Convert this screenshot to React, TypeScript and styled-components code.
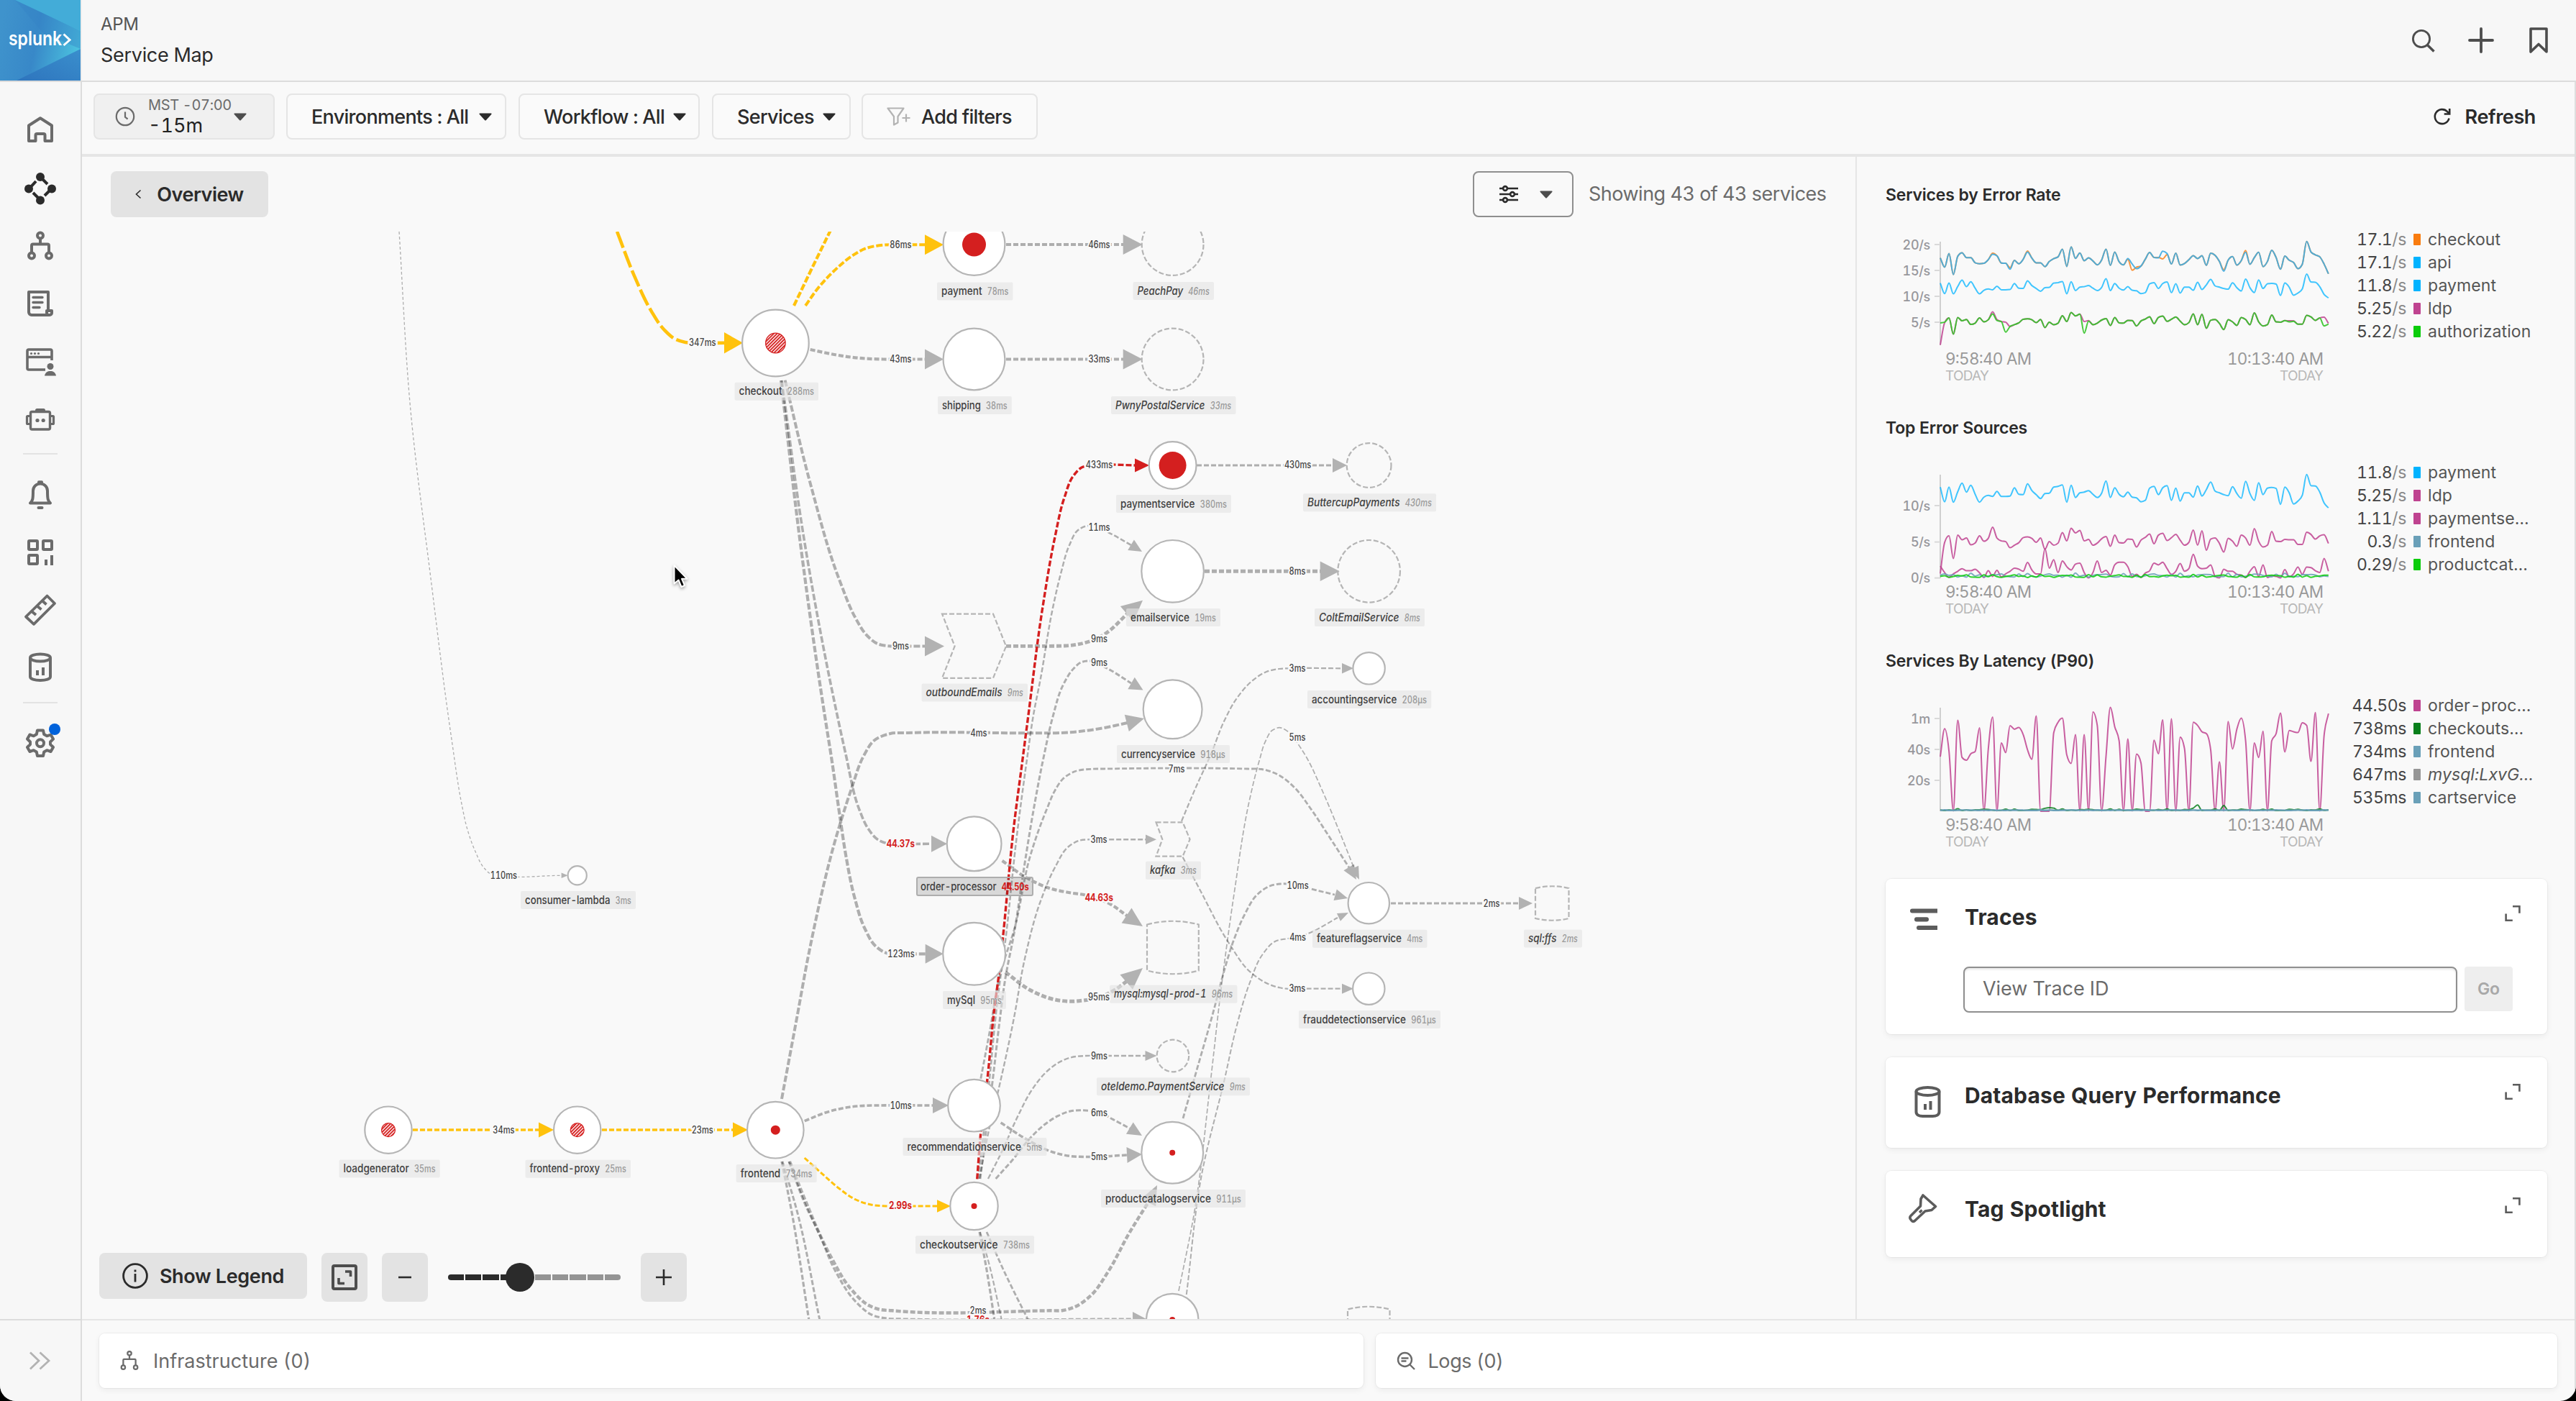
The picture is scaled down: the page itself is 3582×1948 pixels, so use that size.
import React from "react";
import styled, { createGlobalStyle, css } from "styled-components";

const FONT = `Inter, "Noto Sans", "Liberation Sans", sans-serif`;

const GlobalStyle = createGlobalStyle`
  * { box-sizing: border-box; }
  html, body { margin: 0; background: #000; }
  body { font-family: ${FONT}; color: #2b2b2b; font-variant-numeric: tabular-nums; }
  button, input { font-family: inherit; }
`;

/* ---------------------------------------------------------------- layout */

const Shell = styled.div`
  width: 3582px;
  height: 1948px;
  display: flex;
  flex-direction: column;
  background: #f9f9f9;
  border-radius: 0 0 22px 22px;
  overflow: hidden;
`;

const Header = styled.header`
  height: 114px;
  flex: none;
  display: flex;
  background: #f7f7f7;
  border-bottom: 2px solid #dcdcdc;
`;

const Titles = styled.div`
  border-left: 2px solid #ededed;
  padding: 18px 0 0 26px;
  display: flex;
  flex-direction: column;
  gap: 11px;
`;

const Product = styled.div`
  font-size: 24px;
  line-height: 32px;
  letter-spacing: -0.35px;
  color: #555;
`;

const PageTitle = styled.div`
  font-size: 27px;
  line-height: 32px;
  letter-spacing: -0.3px;
  color: #2b2b2b;
`;

const HeaderActions = styled.div`
  margin-left: auto;
  display: flex;
  align-items: center;
  gap: 32px;
  padding-right: 28px;
`;

const Body = styled.div`
  flex: 1;
  min-height: 0;
  display: flex;
`;

const Sidebar = styled.nav`
  width: 114px;
  flex: none;
  display: flex;
  flex-direction: column;
  align-items: center;
  padding-top: 26px;
  background: #f7f7f7;
  border-right: 2px solid #dcdcdc;
`;

const NavItem = styled.div<{ $h?: number }>`
  position: relative;
  width: 112px;
  height: ${(p) => p.$h ?? 80.6}px;
  flex: none;
  display: flex;
  align-items: center;
  justify-content: center;
`;

const NavRule = styled.div<{ $top: number; $bottom: number }>`
  width: 48px;
  height: 2px;
  flex: none;
  background: #e3e3e3;
  margin: ${(p) => p.$top}px 0 ${(p) => p.$bottom}px;
`;

const Notice = styled.i`
  position: absolute;
  left: 68px;
  top: 13px;
  width: 16px;
  height: 16px;
  border-radius: 50%;
  background: #0062db;
`;

const NavFooter = styled.div`
  width: 112px;
  height: 114px;
  margin-top: auto;
  border-top: 2px solid #dcdcdc;
  display: flex;
  align-items: center;
  justify-content: center;
`;

const Main = styled.main`
  flex: 1;
  min-width: 0;
  display: flex;
  flex-direction: column;
  border-right: 2px solid #dedede;
`;

const Toolbar = styled.div`
  height: 104px;
  flex: none;
  display: flex;
  align-items: flex-start;
  padding: 16px 0 0 16px;
  border-bottom: 4px solid #e6e6e6;
`;

const FilterButton = styled.div<{ $w: number; $mr?: number; $filled?: boolean; $pad?: number }>`
  width: ${(p) => p.$w}px;
  height: 64px;
  margin-right: ${(p) => p.$mr ?? 17}px;
  padding-left: ${(p) => p.$pad ?? 33}px;
  display: flex;
  align-items: center;
  border: 2px solid #e5e5e5;
  border-radius: 8px;
  background: ${(p) => (p.$filled ? "#f0f0f0" : "#fafafa")};
  font-size: 27px;
  font-weight: 500;
  white-space: nowrap;
`;

const FilterLabel = styled.span<{ $w: number }>`
  width: ${(p) => p.$w}px;
  letter-spacing: -0.7px;
`;

const TimeText = styled.div`
  width: 119px;
  margin-left: 18px;
  display: flex;
  flex-direction: column;
`;

const Zone = styled.span`
  font-size: 20px;
  font-weight: 400;
  line-height: 25px;
  letter-spacing: -0.35px;
  color: #6b6b6b;
`;

const Range = styled.span`
  font-size: 27px;
  font-weight: 400;
  line-height: 31px;
  color: #222;
`;

const Refresh = styled.div`
  margin: 0 54px 0 auto;
  height: 64px;
  display: flex;
  align-items: center;
  gap: 19px;
  font-size: 27px;
  font-weight: 600;
  letter-spacing: -0.4px;
`;

const Content = styled.div`
  flex: 1;
  min-height: 0;
  display: flex;
`;

const MapPane = styled.section`
  position: relative;
  width: 2466px;
  flex: none;
  display: flex;
  flex-direction: column;
`;

const MapBar = styled.div`
  height: 104px;
  flex: none;
  display: flex;
  align-items: flex-start;
  padding: 20px 40px 0 40px;
`;

const SolidButton = styled.button<{ $w: number; $h: number; $mr?: number }>`
  width: ${(p) => p.$w}px;
  height: ${(p) => p.$h}px;
  margin: 0 ${(p) => p.$mr ?? 0}px 0 0;
  padding: 0;
  border: 0;
  border-radius: 8px;
  background: #e3e3e3;
  color: #2b2b2b;
  font-size: 27px;
  font-weight: 600;
  display: flex;
  align-items: center;
  justify-content: center;
  white-space: nowrap;
`;

const ButtonText = styled.span<{ $ml?: number; $ls?: number }>`
  margin-left: ${(p) => p.$ml ?? 0}px;
  letter-spacing: ${(p) => p.$ls ?? 0}px;
`;

const OptionsButton = styled.div`
  width: 140px;
  height: 64px;
  margin-left: auto;
  border: 2px solid #8f8f8f;
  border-radius: 8px;
  display: flex;
  align-items: center;
  padding-left: 35px;
  gap: 30px;
`;

const Count = styled.div`
  width: 331px;
  margin-left: 21px;
  font-size: 27px;
  line-height: 64px;
  letter-spacing: -0.5px;
  color: #6b6b6b;
  white-space: nowrap;
`;

const MapSvg = styled.svg`
  display: block;
  width: 2466px;
  height: 1512px;
  flex: none;
`;

const ZoomDock = styled.div`
  position: absolute;
  left: 24px;
  bottom: 24px;
  display: flex;
  align-items: flex-start;
`;

const Track = styled.div`
  position: relative;
  width: 240px;
  height: 68px;
  margin: 0 28px;
  display: flex;
  align-items: center;
  gap: 2px;
`;

const Segment = styled.i<{ $on: boolean }>`
  flex: 1;
  height: 8px;
  background: ${(p) => (p.$on ? "#2b2b2b" : "#949494")};
  &:first-child { border-radius: 4px 0 0 4px; }
  &:nth-child(10) { border-radius: 0 4px 4px 0; }
`;

const Thumb = styled.i`
  position: absolute;
  left: 80px;
  top: 14px;
  width: 40px;
  height: 40px;
  border-radius: 50%;
  background: #2b2b2b;
`;

const Aside = styled.aside`
  flex: 1;
  border-left: 2px solid #e6e6e6;
  padding: 36px 37px 0 40px;
  display: flex;
  flex-direction: column;
`;

const Section = styled.section<{ $h: number }>`
  height: ${(p) => p.$h}px;
  flex: none;
`;

const SectionTitle = styled.h3`
  margin: 0;
  font-size: 23px;
  font-weight: 600;
  line-height: 35px;
  height: 32px;
  letter-spacing: -0.2px;
  color: #2b2b2b;
`;

const ChartRow = styled.div`
  display: flex;
`;

const ChartSvg = styled.svg`
  display: block;
  width: 638px;
  height: 270px;
  flex: none;
`;

const LegendList = styled.div`
  flex: 1;
  padding-top: 31px;
  font-size: 23px;
  color: #555;
`;

const LegendItem = styled.div`
  height: 32px;
  display: grid;
  grid-template-columns: 86px 10px 1fr;
  column-gap: 10px;
  align-items: center;
  white-space: nowrap;
`;

const LegendValue = styled.span`
  text-align: right;
  letter-spacing: -0.4px;
  color: #444;
  em { font-style: normal; color: #8a8a8a; }
`;

const Swatch = styled.i<{ $c: string }>`
  width: 10px;
  height: 16px;
  border-radius: 1px;
  background: ${(p) => p.$c};
`;

const LegendName = styled.span<{ $italic?: boolean }>`
  font-style: ${(p) => (p.$italic ? "italic" : "normal")};
  letter-spacing: 0.1px;
`;

const surface = css`
  background: #fff;
  border-radius: 8px;
  box-shadow: 0 0 0 1px rgba(0, 0, 0, 0.04), 0 3px 9px rgba(0, 0, 0, 0.06);
`;

const Card = styled.div<{ $h: number }>`
  ${surface}
  width: 920px;
  height: ${(p) => p.$h}px;
  margin-bottom: 32px;
  flex: none;
`;

const CardHead = styled.div`
  display: flex;
  align-items: flex-start;
  padding: 32px 37px 0 30px;
`;

const CardIcon = styled.div`
  width: 80px;
`;

const CardTitle = styled.h2`
  margin: 0;
  flex: 1;
  font-size: 30px;
  font-weight: 700;
  line-height: 42px;
  letter-spacing: 0.12px;
`;

const TraceForm = styled.div`
  display: flex;
  gap: 10px;
  padding: 42px 0 0 108px;
`;

const TraceInput = styled.div`
  width: 687px;
  height: 64px;
  border: 2px solid #8f8f8f;
  border-radius: 8px;
  padding-left: 25px;
  line-height: 58px;
  font-size: 27px;
  letter-spacing: -0.05px;
  color: #6b6b6b;
  box-shadow: inset 0 2px 3px rgba(0, 0, 0, 0.1);
`;

const GoButton = styled.div`
  width: 67px;
  height: 62px;
  border-radius: 4px;
  background: #eee;
  color: #a8a8a8;
  font-size: 23px;
  font-weight: 600;
  line-height: 62px;
  text-align: center;
`;

const BottomBar = styled.footer`
  height: 114px;
  flex: none;
  border-top: 2px solid #e6e6e6;
  display: flex;
  gap: 17px;
  padding: 18px 24px 0;
`;

const Drawer = styled.div<{ $w: number; $gap?: number; $ls?: number }>`
  ${surface}
  width: ${(p) => p.$w}px;
  height: 76px;
  display: flex;
  align-items: center;
  gap: ${(p) => p.$gap ?? 20}px;
  padding-left: 29px;
  font-size: 27px;
  letter-spacing: ${(p) => p.$ls ?? 0}px;
  color: #6b6b6b;
`;

/* ----------------------------------------------------------------- icons */

const NavGlyph = styled.svg`
  overflow: visible;
`;

const NavIcon = ({ children, color = "#6b6b6b" }: { children: React.ReactNode; color?: string }) => (
  <NavGlyph width="48" height="48" viewBox="0 0 48 48" fill="none" stroke={color} strokeWidth="4" strokeLinejoin="round">
    {children}
  </NavGlyph>
);

const Caret = ({ color = "#2b2b2b" }: { color?: string }) => (
  <svg width="18" height="11" viewBox="0 0 18 11">
    <path d="M1 .5h16q1 .4.3 1.4L9.8 10.2q-.8.8-1.6 0L.7 1.9Q0 .9 1 .5z" fill={color} />
  </svg>
);

const HierarchyShapes = () => (
  <>
    <circle cx="24" cy="10.500" r="4" />
    <path d="M24 14.500v8M12 34.500V24.500a2 2 0 0 1 2-2h20a2 2 0 0 1 2 2v10" />
    <circle cx="12" cy="38.500" r="4" />
    <circle cx="36" cy="38.500" r="4" />
  </>
);

const CylinderShapes = () => (
  <>
    <ellipse cx="24" cy="10.500" rx="14" ry="5" />
    <path d="M10 10.500V37c0 3 6 5 14 5s14-2 14-5V10.500M20 28v7M28 24v11" />
  </>
);

const Expand = styled.svg`
  margin-top: 5px;
`;

const ExpandIcon = () => (
  <Expand width="22" height="22" viewBox="0 0 22 22" fill="none" stroke="#5c5c5c" strokeWidth="2.600">
    <path d="M11 1.300h9.400v9.400M1.600 11.500v9.200h9.200" />
  </Expand>
);

const Logo = () => (
  <svg width="112" height="112" viewBox="0 0 112 112">
    <defs>
      <linearGradient id="mid" x1="0" y1="0.4" x2="1" y2="0.6">
        <stop offset="0" stopColor="#3f93cc" />
        <stop offset="0.45" stopColor="#3888c8" />
        <stop offset="1" stopColor="#4cc4e0" />
      </linearGradient>
      <linearGradient id="low" x1="0" y1="1" x2="1" y2="0">
        <stop offset="0" stopColor="#2e74bd" />
        <stop offset="1" stopColor="#3a8fcd" />
      </linearGradient>
    </defs>
    <rect width="112" height="112" fill="url(#mid)" />
    <path d="M21 0L60 46L112 68V43z" fill="#3583c6" opacity="0.4" />
    <path d="M21 0H112V43z" fill="#43acd8" />
    <path d="M112 68V112H23z" fill="url(#low)" />
    <text x="12" y="63" fontFamily={FONT} fontSize="27" fontWeight="600" fill="#fff" textLength="74" lengthAdjust="spacingAndGlyphs">splunk</text>
    <path d="M88.500 47.500L97 55.500L88.500 63" fill="none" stroke="#fff" strokeWidth="3" />
  </svg>
);

/* ------------------------------------------------------------ service map */

type Pt = [number, number];

/* Smooth curve through the given points, tangents weighted by chord length. */
function spline(pts: Pt[]): string {
  const n = pts.length;
  const seg = pts.slice(1).map((p, i) => {
    const dx = p[0] - pts[i][0];
    const dy = p[1] - pts[i][1];
    const l = Math.hypot(dx, dy) || 1;
    return { ux: dx / l, uy: dy / l, l };
  });
  const tan = pts.map((_, i) => {
    if (i === 0) return [seg[0].ux, seg[0].uy];
    if (i === n - 1) return [seg[n - 2].ux, seg[n - 2].uy];
    const a = seg[i - 1];
    const b = seg[i];
    const s = a.l + b.l;
    return [(a.ux * b.l + b.ux * a.l) / s, (a.uy * b.l + b.uy * a.l) / s];
  });
  let d = `M${pts[0][0]} ${pts[0][1]}`;
  for (let i = 0; i < n - 1; i++) {
    const k = seg[i].l / 3;
    const [x0, y0] = pts[i];
    const [x1, y1] = pts[i + 1];
    const f = (v: number) => v.toFixed(1);
    d += `C${f(x0 + tan[i][0] * k)} ${f(y0 + tan[i][1] * k)} ${f(x1 - tan[i + 1][0] * k)} ${f(y1 - tan[i + 1][1] * k)} ${x1} ${y1}`;
  }
  return d;
}

const GREY = "rgba(0,0,0,0.3)";
const GOLD = "#ffc20d";
const RED = "#d41f1f";

interface Edge {
  p: Pt[];
  w: number;
  c?: string;
  dash?: string;
  tip?: Pt;
  head?: [number, number];
  t?: string;
  at?: Pt;
  hot?: boolean;
}

const edges: Edge[] = [
  { p: [[555, 322], [571, 571], [598.5, 800], [628, 1028], [642, 1118], [649, 1150], [661, 1184], [673, 1206.7], [682, 1215], [692, 1217], [781, 1217.3]], w: 1.3, dash: "4 3", tip: [789.6, 1217.3], head: [9, 3.8], t: "110ms", at: [700.4, 1217] },
  { p: [[858, 322], [881.6, 382.6], [905.7, 432.6], [923.5, 458.5], [938, 471], [953, 476], [970, 476.8], [1008, 476.8]], w: 4.6, c: GOLD, dash: "24 5", tip: [1033, 476.8], head: [26, 14.7], t: "347ms", at: [976.8, 476] },
  { p: [[1104, 425], [1130, 371], [1155, 320]], w: 4.2, c: GOLD, dash: "9 3" },
  { p: [[1120, 425], [1138, 400], [1163, 373.6], [1183, 357], [1205, 345], [1229, 340.7], [1245, 340.3], [1288, 340.3]], w: 4, c: GOLD, dash: "9 3", tip: [1312, 340.3], head: [26, 14], t: "86ms", at: [1252.4, 340] },
  { p: [[1399, 340], [1564, 340]], w: 4.2, tip: [1588.7, 340], head: [27, 14], t: "46ms", at: [1528.5, 340] },
  { p: [[1126.7, 486], [1155, 492], [1194, 497.8], [1229, 499.5], [1245, 499.5], [1289, 499.5]], w: 4.2, tip: [1312, 499.5], head: [26, 14], t: "43ms", at: [1252.4, 499] },
  { p: [[1399, 499.5], [1564, 499.5]], w: 4.2, tip: [1588.7, 499.5], head: [27, 14], t: "33ms", at: [1528.5, 499] },
  { p: [[1091.6, 528.6], [1126.7, 672], [1168.6, 810], [1190, 860], [1205, 883], [1220, 895], [1236, 898.3], [1250, 898.5], [1289, 898.5]], w: 4, dash: "9 3", tip: [1313, 898.5], head: [27, 14], t: "9ms", at: [1252.4, 898] },
  { p: [[1087, 529], [1117.5, 746], [1164.5, 996], [1176.3, 1050], [1195.4, 1127], [1207, 1152], [1220, 1167], [1234, 1172.8], [1248, 1173.3], [1297, 1173.3]], w: 3.6, dash: "9 3", tip: [1317, 1173.3], head: [22, 11.5], t: "44.37s", at: [1252.4, 1173], hot: true },
  { p: [[1086, 529], [1111.7, 746], [1147, 996], [1155.6, 1050], [1168.6, 1140], [1176.3, 1190], [1188, 1246.7], [1203, 1292], [1218, 1316], [1233.7, 1325.5], [1250, 1326.3], [1290, 1326.3]], w: 4.2, dash: "9 3", tip: [1311.7, 1326.3], head: [25, 13.5], t: "123ms", at: [1253, 1326] },
  { p: [[1087, 1528], [1107.8, 1416.7], [1126.5, 1316.7], [1164.8, 1156.7], [1184, 1096.7], [1201.5, 1050], [1215, 1030], [1238, 1020], [1262, 1019], [1440, 1019.3], [1475, 1019], [1501, 1017], [1537, 1011.7], [1568, 1005]], w: 4, dash: "9 3", tip: [1591, 999], head: [25, 12], t: "4ms", at: [1361, 1019] },
  { p: [[1399, 898.3], [1460, 898.3], [1480, 898], [1498.6, 896], [1515.8, 891.5], [1536, 881.7], [1569, 852]], w: 4.8, tip: [1589, 834.8], head: [29, 14], t: "9ms", at: [1528.5, 888] },
  { p: [[1675, 794.3], [1838, 794.3]], w: 5, tip: [1862.7, 794.3], head: [27, 13.7], t: "8ms", at: [1804, 794] },
  { p: [[1664, 647], [1855, 647]], w: 3.2, tip: [1873, 647], head: [20, 10], t: "430ms", at: [1804.6, 646.5] },
  { p: [[1360, 1639], [1368, 1573], [1376, 1500], [1386, 1400], [1399, 1300], [1413, 1170], [1428.8, 1050], [1436.6, 996.4], [1447, 943], [1463, 850], [1475.6, 795.5], [1487, 758], [1498.6, 737.5], [1510, 731.5], [1522, 732], [1541.7, 740.6], [1573, 758]], w: 2.5, tip: [1588, 767], head: [18, 8.5], t: "11ms", at: [1528.5, 733] },
  { p: [[1363, 1639], [1371, 1573], [1380.6, 1499.7], [1390, 1420], [1398, 1360], [1409.7, 1300], [1425, 1200], [1436.5, 1130], [1451.8, 1050], [1464, 996.4], [1478.5, 952], [1493, 929.5], [1503, 921], [1515, 919], [1538.8, 929], [1573, 950]], w: 3, tip: [1589.5, 959.5], head: [19, 9.5], t: "9ms", at: [1528.5, 921] },
  { p: [[1363.8, 1499.7], [1377, 1430], [1390.5, 1355], [1411, 1290], [1432.6, 1190], [1455.6, 1125], [1467, 1099], [1478, 1083], [1495, 1072.5], [1516.8, 1069.3], [1535, 1069], [1735, 1069], [1754, 1069.5], [1777, 1077], [1800, 1095], [1823, 1125], [1850, 1166], [1877, 1208]], w: 2.8, tip: [1886, 1223], head: [20, 8.5], t: "7ms", at: [1636, 1069] },
  { p: [[1362, 1639], [1376, 1567], [1388, 1517], [1409.7, 1416.7], [1425, 1333], [1448, 1250], [1467, 1206], [1486, 1177], [1500, 1169], [1514, 1167.3], [1530, 1167.3], [1593, 1167.3]], w: 2.4, tip: [1608, 1167.3], head: [15, 6.7], t: "3ms", at: [1528, 1167] },
  { p: [[1374, 1639], [1393.7, 1600], [1414.8, 1553], [1435.8, 1514], [1453.4, 1492], [1471, 1478], [1488.5, 1470.5], [1510, 1468], [1525, 1468], [1594, 1468]], w: 2.4, tip: [1608.5, 1468], head: [16, 7], t: "9ms", at: [1528.4, 1468] },
  { p: [[1384.6, 1639], [1407.8, 1613], [1432, 1583], [1453.4, 1563], [1471, 1551.7], [1488.5, 1545], [1509.5, 1544], [1528, 1546.5], [1548, 1556.7], [1573, 1570]], w: 3, tip: [1588, 1579], head: [20, 9.5], t: "6ms", at: [1528.4, 1547] },
  { p: [[1391.6, 1561], [1428.8, 1585], [1464, 1602], [1488.5, 1607.5], [1513, 1608.5], [1568, 1606]], w: 3.5, tip: [1588, 1605], head: [21, 11], t: "5ms", at: [1528.4, 1608] },
  { p: [[1118.7, 1558.7], [1148, 1547], [1179.8, 1539.5], [1204, 1537.3], [1220, 1537], [1299, 1537]], w: 3.6, tip: [1319, 1537], head: [22, 11], t: "10ms", at: [1252.7, 1537] },
  { p: [[1118.7, 1610], [1141, 1630], [1165.8, 1651.7], [1190, 1668], [1211, 1675], [1232, 1677], [1250, 1677], [1305, 1677]], w: 3, c: GOLD, tip: [1322, 1677], head: [19, 8.8], t: "2.99s", at: [1252, 1676.5], hot: true },
  { p: [[1098, 1615], [1120, 1670], [1155, 1746.7], [1183, 1792], [1208, 1815], [1222, 1820.5], [1240, 1822.3], [1460, 1822.3], [1478, 1822], [1495.5, 1816.7], [1516.5, 1801.7], [1541, 1768], [1569, 1716.7], [1599, 1668]], w: 4.4, tip: [1609, 1648], head: [27, 11.5], t: "2ms", at: [1360, 1822] },
  { p: [[1097, 1615], [1122, 1680], [1137.7, 1712], [1162, 1768], [1190, 1810], [1212, 1828], [1236, 1833.5], [1255, 1834], [1577, 1834]], w: 3.2, tip: [1594, 1834], head: [19, 10], t: "1.76s", at: [1360, 1835.5], hot: true },
  { p: [[1087, 1615], [1100.5, 1683], [1125, 1836]], w: 3.2 },
  { p: [[1088, 1615], [1108, 1683], [1140, 1836]], w: 3 },
  { p: [[1362, 1713], [1371, 1760], [1383, 1836]], w: 3.2 },
  { p: [[1363, 1713], [1376, 1760], [1393, 1836]], w: 2.2 },
  { p: [[1372, 1713], [1395, 1765], [1430, 1836]], w: 2.8 },
  { p: [[1643, 1141.7], [1662, 1096.7], [1684.7, 1046.7], [1702, 1003], [1720.4, 970], [1740.8, 947], [1761, 934], [1779, 930], [1795, 929.3], [1867, 929.3]], w: 2.2, tip: [1882, 929.3], head: [16, 7.3], t: "3ms", at: [1804, 929] },
  { p: [[1644.6, 1191.7], [1670, 1240], [1708, 1310], [1738.8, 1351.7], [1765.6, 1369], [1788.5, 1374.7], [1805, 1374.7], [1867, 1374.7]], w: 2.2, tip: [1882, 1374.7], head: [16, 7], t: "3ms", at: [1803.8, 1374.5] },
  { p: [[1934, 1256], [2114, 1256]], w: 3.2, tip: [2131, 1256], head: [19, 9], t: "2ms", at: [2074, 1256] },
  { p: [[1393.6, 1196.7], [1425, 1219], [1459.4, 1235], [1486, 1241], [1511.5, 1245], [1528, 1250], [1539.8, 1255], [1571, 1276]], w: 4.2, tip: [1589, 1288], head: [27, 12.5], t: "44.63s", at: [1528.3, 1248], hot: true },
  { p: [[1398, 1351.7], [1432.7, 1376.7], [1463, 1389], [1486, 1392.3], [1509, 1390.7], [1528, 1387], [1547.5, 1378], [1575, 1358]], w: 5, tip: [1589, 1346], head: [30, 13.5], t: "95ms", at: [1528, 1386] },
  { p: [[1645, 1555], [1660.7, 1499.7], [1689, 1400], [1700.5, 1356], [1716, 1306], [1731, 1271], [1748, 1244], [1765.6, 1232], [1780, 1229], [1800, 1230], [1823, 1236], [1856, 1244]], w: 2.8, tip: [1874, 1249], head: [18, 8], t: "10ms", at: [1804.6, 1231] },
  { p: [[1649.8, 1800], [1671, 1633], [1703, 1499.7], [1719.6, 1426.7], [1738, 1366], [1755, 1328], [1773, 1309], [1790, 1305], [1804, 1303], [1819, 1298], [1860, 1276]], w: 2, tip: [1875, 1269], head: [15, 6], t: "4ms", at: [1804.6, 1303] },
  { p: [[1639, 1795], [1660, 1690], [1683.7, 1499.7], [1697, 1383], [1716, 1243], [1738, 1110], [1751, 1058], [1760, 1030], [1769, 1015.5], [1779, 1011.7], [1790, 1016.5], [1804.6, 1034], [1815, 1050], [1839, 1100], [1862, 1155], [1882, 1205]], w: 1.7, tip: [1890, 1223], head: [18, 7], t: "5ms", at: [1804, 1025] },
  { p: [[574, 1571], [751, 1571]], w: 3.6, c: GOLD, tip: [770, 1571], head: [21, 10.5], t: "34ms", at: [700.4, 1571] },
  { p: [[837, 1571], [1021, 1571]], w: 3.6, c: GOLD, tip: [1040, 1571], head: [21, 10.5], t: "23ms", at: [976.7, 1571] },
  { p: [[1358.7, 1639.3], [1364, 1573], [1373, 1500], [1383, 1400], [1389, 1355], [1394.4, 1305], [1409.7, 1150], [1422.7, 1050], [1429.7, 996.4], [1449.8, 844.6], [1467, 746.4], [1480, 692], [1493, 661], [1505, 649.5], [1520, 647], [1580, 647]], w: 3.4, c: RED, dash: "8 3", tip: [1598, 647], head: [20, 9.6], t: "433ms", at: [1528.5, 646.5] },
];

const EdgeLine = ({ e }: { e: Edge }) => {
  const c = e.c ?? GREY;
  let head: React.ReactNode = null;
  if (e.tip && e.head) {
    const last = e.p[e.p.length - 1];
    const a = Math.atan2(e.tip[1] - last[1], e.tip[0] - last[0]);
    const [l, h] = e.head;
    head = (
      <path
        d={`M0 0L${-l} ${-h}V${h}z`}
        transform={`translate(${e.tip[0]} ${e.tip[1]}) rotate(${(a * 180) / Math.PI})`}
        fill={e.c ?? "#b2b2b2"}
      />
    );
  }
  return (
    <g>
      <path d={spline(e.p)} fill="none" stroke={c} strokeWidth={e.w} strokeDasharray={e.dash ?? "7 3"} />
      {head}
    </g>
  );
};

const EdgeText = ({ e }: { e: Edge }) => {
  if (!e.t || !e.at) return null;
  const digits = e.t.replace(/[^0-9]/g, "").length;
  const w = digits * 7.3 + (e.t.endsWith("ms") ? 15.5 : 6.5) + (e.t.includes(".") ? 3.5 : 0);
  return (
    <text
      x={e.at[0]}
      y={e.at[1] + 4.9}
      textAnchor="middle"
      textLength={w}
      lengthAdjust="spacingAndGlyphs"
      fontSize="14"
      fontWeight={e.hot ? 700 : 500}
      fill={e.hot ? RED : "#444"}
      stroke="#f9f9f9"
      strokeWidth="5"
      paintOrder="stroke"
    >
      {e.t}
    </text>
  );
};

interface Circle {
  x: number;
  y: number;
  r: number;
  dashed?: boolean;
  dot?: number;
  hatch?: boolean;
}

const circles: Circle[] = [
  { x: 1354.5, y: 340, r: 44, dot: 16.5 },
  { x: 1630.6, y: 340, r: 44, dashed: true },
  { x: 1078.4, y: 477, r: 47.4, dot: 14.3, hatch: true },
  { x: 1354.5, y: 499.5, r: 44 },
  { x: 1630.6, y: 499.5, r: 44, dashed: true },
  { x: 1630.6, y: 647, r: 34, dot: 19 },
  { x: 1903.6, y: 647, r: 32, dashed: true },
  { x: 1630.6, y: 794.3, r: 44.4 },
  { x: 1903.6, y: 794.3, r: 44.4, dashed: true },
  { x: 1903.6, y: 929.3, r: 23.3 },
  { x: 1630.6, y: 986.3, r: 42 },
  { x: 1354.6, y: 1173.3, r: 39 },
  { x: 1354.6, y: 1326.3, r: 44.5 },
  { x: 1903.3, y: 1255.7, r: 29.8 },
  { x: 1903.3, y: 1374.7, r: 23.3 },
  { x: 1630.9, y: 1468, r: 23.4, dashed: true },
  { x: 802.7, y: 1217.3, r: 14.2 },
  { x: 540, y: 1571.2, r: 33.8, dot: 10, hatch: true },
  { x: 802.7, y: 1571.2, r: 33.8, dot: 10, hatch: true },
  { x: 1078.3, y: 1571.2, r: 40.4, dot: 6.5 },
  { x: 1354.5, y: 1537.2, r: 37.4 },
  { x: 1354.5, y: 1677, r: 34.3, dot: 4 },
  { x: 1630.2, y: 1602.8, r: 44, dot: 4 },
  { x: 1630.2, y: 1835, r: 37.3, dot: 4 },
];

const outlines = [
  "M1310 853.6H1381L1399 898.5L1381 942.8H1310L1327.6 898.5Z",
  "M1607.5 1143.3H1644.6L1654.6 1167L1644.6 1190.7H1607.5L1616.3 1167Z",
  "M1595 1285.5Q1631 1276 1666.8 1285.5V1349.5Q1631 1359 1595 1349.5Z",
  "M2135 1235Q2158.5 1229.5 2181.5 1235V1277Q2158.5 1282.5 2135 1277Z",
  "M1874 1840V1820.5Q1903 1813 1932.5 1820.5V1840",
];

/* name, value, left, right, top, italic */
type Tag = [string, string, number, number, number, boolean?];

const tags: Tag[] = [
  ["payment", "78ms", 1303, 1408.5, 392.5],
  ["PeachPay", "46ms", 1575.5, 1688, 392, true],
  ["checkout", "288ms", 1021.6, 1138, 531.7],
  ["shipping", "38ms", 1304, 1406.8, 551],
  ["PwnyPostalService", "33ms", 1545, 1718.4, 551, true],
  ["paymentservice", "380ms", 1552, 1712, 688],
  ["ButtercupPayments", "430ms", 1812, 1997, 686.3, true],
  ["emailservice", "19ms", 1566, 1697, 846],
  ["ColtEmailService", "8ms", 1828, 1981, 846, true],
  ["outboundEmails", "9ms", 1281.6, 1429, 950.4, true],
  ["accountingservice", "208µs", 1818, 1990.3, 960],
  ["currencyservice", "918µs", 1553, 1710, 1036],
  ["mySql", "95ms", 1311, 1399, 1378],
  ["kafka", "3ms", 1593, 1670, 1197.7, true],
  ["mysql:mysql-prod-1", "96ms", 1543, 1720.4, 1369.7, true],
  ["featureflagservice", "4ms", 1825, 1984.5, 1292.7],
  ["sql:ffs", "2ms", 2119, 2200, 1292.4, true],
  ["frauddetectionservice", "961µs", 1806, 2003, 1405],
  ["consumer-lambda", "3ms", 724, 884, 1239],
  ["loadgenerator", "35ms", 471.6, 611.7, 1612.5],
  ["frontend-proxy", "25ms", 730.5, 877, 1612.7],
  ["frontend", "734ms", 1023.7, 1135.7, 1619],
  ["recommendationservice", "5ms", 1255.5, 1455.5, 1582],
  ["oteldemo.PaymentService", "9ms", 1525, 1738, 1498.3, true],
  ["productcatalogservice", "911µs", 1531, 1732, 1654],
  ["checkoutservice", "738ms", 1273, 1438, 1718.3],
];

const NodeTag = ({ tag, selected }: { tag: Tag; selected?: boolean }) => {
  const [name, value, x1, x2, top, italic] = tag;
  const digits = value.replace(/[^0-9]/g, "").length;
  const vw = selected ? 38 : digits * 7.5 + (value.endsWith("ms") ? 14.5 : 12);
  const nw = x2 - x1 - 12.5 - 7 - vw;
  const h = selected ? 27 : 25;
  return (
    <g>
      <rect
        x={selected ? x1 + 1 : x1}
        y={selected ? top + 1 : top}
        width={selected ? x2 - x1 - 2 : x2 - x1}
        height={selected ? h - 2 : h}
        rx="2"
        fill={selected ? "rgba(0,0,0,0.13)" : "rgba(228,228,228,0.62)"}
        stroke={selected ? "#adadad" : "none"}
        strokeWidth="2"
      />
      <text x={x1 + 6} y={top + h / 2 + 5.2} fontSize="15.5" fontWeight="500" fontStyle={italic ? "italic" : "normal"} fill="#404040" textLength={nw} lengthAdjust="spacingAndGlyphs">
        {name}
      </text>
      <text
        x={x2 - 6.2}
        y={top + h / 2 + 5.2}
        textAnchor="end"
        fontSize="14"
        fontWeight={selected ? 700 : 500}
        fontStyle={italic ? "italic" : "normal"}
        fill={selected ? RED : "#999"}
        textLength={vw}
        lengthAdjust="spacingAndGlyphs"
      >
        {value}
      </text>
    </g>
  );
};

const Pointer = styled.path`
  filter: drop-shadow(0 2px 2px rgba(0, 0, 0, 0.35));
`;

const ServiceMap = () => (
  <MapSvg viewBox="114 322 2466 1512" fontFamily={FONT}>
    <defs>
      <pattern id="hatch" width="3.2" height="3.2" patternUnits="userSpaceOnUse" patternTransform="rotate(45)">
        <rect width="3.2" height="3.2" fill="#fbe4e4" />
        <rect width="1.7" height="3.2" fill={RED} />
      </pattern>
    </defs>
    {edges.map((e, i) => (
      <EdgeLine key={i} e={e} />
    ))}
    {circles.map((c, i) => (
      <g key={i}>
        <circle
          cx={c.x}
          cy={c.y}
          r={c.r - 1.1}
          fill={c.dashed ? "none" : "#fff"}
          stroke="#b5b5b5"
          strokeWidth={2.2}
          strokeDasharray={c.dashed ? "7 3" : undefined}
        />
        {c.dot && (
          <circle cx={c.x} cy={c.y} r={c.hatch ? c.dot - 0.5 : c.dot} fill={c.hatch ? "url(#hatch)" : RED} stroke={c.hatch ? RED : "none"} strokeWidth="1.2" />
        )}
      </g>
    ))}
    {outlines.map((d) => (
      <path key={d} d={d} fill="none" stroke="#b5b5b5" strokeWidth="2.2" strokeDasharray="7 3" />
    ))}
    {tags.map((t) => (
      <NodeTag key={t[0]} tag={t} />
    ))}
    <NodeTag tag={["order-processor", "44.50s", 1274, 1437, 1219]} selected />
    {edges.map((e, i) => (
      <EdgeText key={i} e={e} />
    ))}
    <g transform="translate(937.5 786)">
      <Pointer d="M0 0V25.5L6 20.5L10 30L14.5 28L10.500 18.8H18Z" fill="#000" stroke="#fff" strokeWidth="2" strokeLinejoin="round" />
    </g>
  </MapSvg>
);

/* ----------------------------------------------------------------- charts */

/* Sample levels, counted downwards from the head of the plot. */
const api = [388,424,371,453,382,368,387,387,407,411,409,395,374,380,408,409,432,398,411,394,365,389,407,407,422,402,391,384,354,421,345,390,369,399,388,400,415,396,354,417,365,403,415,391,412,430,420,393,367,386,388,362,371,412,370,416,410,395,379,391,379,417,370,378,402,440,397,383,416,399,366,413,387,366,422,402,358,387,432,381,397,406,430,413,324,365,376,384,412,450];
const payment = [486,527,486,528,499,475,500,481,506,528,514,509,512,498,512,512,511,488,506,507,477,496,507,518,504,503,486,484,480,528,481,515,502,500,496,506,515,503,469,515,488,506,513,500,514,516,527,523,489,484,507,488,482,523,489,525,502,502,514,483,511,493,472,497,502,507,510,485,504,517,470,504,523,474,507,489,487,490,534,486,502,533,525,509,451,482,483,500,530,544];
const ldp = [727,640,622,685,620,633,628,647,642,622,637,629,598,628,636,638,655,648,641,627,625,629,640,628,659,638,648,642,613,636,601,614,607,636,632,648,642,630,624,651,620,641,642,631,632,653,634,626,617,644,620,615,635,627,618,634,648,640,606,648,608,662,631,628,643,667,629,637,651,620,628,648,602,637,653,648,610,637,638,632,633,633,646,646,612,618,631,622,619,643];
const withPatch = (base: number[], patch: Record<number, number>) => base.map((v, i) => patch[i] ?? v);
const checkout = withPatch(api, { 12: 370, 16: 426, 20: 361, 43: 393, 44: 436, 45: 424, 50: 386, 51: 392, 52: 375, 65: 434, 70: 359 });
const authorization = withPatch(ldp, { 0: 641, 1: 638, 12: 606, 13: 632, 15: 677, 33: 681, 34: 634, 80: 637, 81: 635, 88: 653, 89: 646 });
const paymentservice = [20,45,64,50,40,30,38,38,32,46,64,38,60,36,62,50,40,28,32,40,6,35,50,50,-48,28,-5,45,0,22,35,12,8,45,66,45,0,45,36,55,15,5,5,22,60,52,64,47,38,8,15,5,30,52,40,10,40,30,-26,20,30,28,15,60,66,32,40,40,52,55,64,40,22,60,15,64,58,60,66,34,62,50,24,52,24,26,38,45,-10,40];
const orderProcessor = [762,653,740,973,620,765,776,750,742,650,973,735,608,973,708,746,641,655,648,675,735,772,603,974,974,974,670,628,612,755,788,676,973,676,973,588,640,973,760,570,645,700,973,693,973,752,785,974,974,698,750,619,973,615,973,686,730,973,628,640,665,672,735,973,782,973,625,732,655,612,700,973,708,765,663,973,700,672,592,743,660,665,668,630,640,780,590,973,680,594];
const ripple = (base: number, amp: number, phase: number) =>
  Array.from({ length: 90 }, (_, i) => base - Math.abs(Math.sin(i * 1.7 + phase) * Math.cos(i * 0.53 + phase)) * amp);
const checkoutservice = withPatch(ripple(972, 7, 1), { 24: 963, 25: 960, 26: 962, 58: 962, 59: 950, 65: 952 });

const X0 = 76;
const STEP = 6.065;

/* Monotone cubic through evenly spaced samples. */
function monotone(ys: number[]): string {
  const n = ys.length;
  const s = ys.slice(1).map((y, i) => y - ys[i]);
  const m = ys.map((_, i) => {
    if (i === 0) return s[0];
    if (i === n - 1) return s[n - 2];
    const a = s[i - 1];
    const b = s[i];
    return a * b <= 0 ? 0 : Math.sign(a) * Math.min(Math.abs(a), Math.abs(b), Math.abs(a + b) / 4) * 2;
  });
  let d = `M${X0} ${ys[0].toFixed(1)}`;
  for (let i = 0; i < n - 1; i++) {
    const x = X0 + i * STEP;
    d += `C${(x + STEP / 3).toFixed(1)} ${(ys[i] + m[i] / 3).toFixed(1)} ${(x + (STEP * 2) / 3).toFixed(1)} ${(ys[i + 1] - m[i + 1] / 3).toFixed(1)} ${(x + STEP).toFixed(1)} ${ys[i + 1].toFixed(1)}`;
  }
  return d;
}

const K = 0.35714;
const rateY = (v: number) => v * K - 66;
const errorY = (v: number) => 193.6 - ((739.2 - v) / 20.16) * 10.06;
const smallY = (v: number) => 170 + v * K;
const latencyY = (v: number) => v * K - 154;

interface Line {
  data: number[];
  c: string;
  y: (v: number) => number;
  w?: number;
  o?: number;
}

interface ChartProps {
  title: string;
  h: number;
  ticks: [string, number][];
  lines: Line[];
  legend: { v: string; unit?: string; name: string; c: string; italic?: boolean }[];
}

const Chart = ({ title, h, ticks, lines, legend }: ChartProps) => (
  <Section $h={h}>
    <SectionTitle>{title}</SectionTitle>
    <ChartRow>
      <ChartSvg viewBox="0 0 638 270" fontFamily={FONT}>
        <path d={`M${X0} 50V194`} stroke="#cfcfcf" strokeWidth="2" />
        {ticks.map(([label, y]) => (
          <g key={label}>
            <path d={`M68 ${y}H76`} stroke="#d9d9d9" strokeWidth="2" />
            <text x="62" y={y + 6.5} textAnchor="end" fontSize="18" fontWeight="500" fill="#97979c" letterSpacing="-0.3">
              {label}
            </text>
          </g>
        ))}
        {lines.map((l, i) => (
          <path key={i} d={monotone(l.data.map(l.y))} fill="none" stroke={l.c} strokeWidth={l.w ?? 2} opacity={l.o ?? 0.85} />
        ))}
        <text x="83" y="220.5" fontSize="22.5" fill="#999" textLength="120">9:58:40 AM</text>
        <text x="83" y="243" fontSize="19" fill="#b8b8b8" textLength="61">TODAY</text>
        <text x="609" y="220.5" fontSize="22.5" fill="#999" textAnchor="end" textLength="134">10:13:40 AM</text>
        <text x="609" y="243" fontSize="19" fill="#b8b8b8" textAnchor="end" textLength="61">TODAY</text>
      </ChartSvg>
      <LegendList>
        {legend.map((l) => (
          <LegendItem key={l.name}>
            <LegendValue>
              {l.v}
              {l.unit && <em>{l.unit}</em>}
            </LegendValue>
            <Swatch $c={l.c} />
            <LegendName $italic={l.italic}>{l.name}</LegendName>
          </LegendItem>
        ))}
      </LegendList>
    </ChartRow>
  </Section>
);

const BLUE = "#00b3ff";
const MAGENTA = "#bf4390";
const GREEN = "#0bcc0b";
const STEEL = "#6aa0b8";
const FOREST = "#087f1b";

/* -------------------------------------------------------------------- app */

const FunnelIcon = styled.svg`
  margin-right: 14px;
`;

export default function App() {
  return (
    <>
      <GlobalStyle />
      <Shell>
        <Header>
          <Logo />
          <Titles>
            <Product>APM</Product>
            <PageTitle>Service Map</PageTitle>
          </Titles>
          <HeaderActions>
            <svg width="48" height="48" viewBox="0 0 48 48" fill="none" stroke="#4d4d4d" strokeWidth="2.8">
              <circle cx="21" cy="22" r="11.6" />
              <path d="M29.300 30.5L38.500 39.5" strokeWidth="3.4" />
            </svg>
            <svg width="48" height="48" viewBox="0 0 48 48" fill="none" stroke="#4d4d4d" strokeWidth="3.8" strokeLinecap="round">
              <path d="M24 8v32M8 24h32" />
            </svg>
            <svg width="48" height="48" viewBox="0 0 48 48" fill="none" stroke="#4d4d4d" strokeWidth="3.6" strokeLinejoin="round">
              <path d="M13 8h22v32l-11-10.500L13 40z" />
            </svg>
          </HeaderActions>
        </Header>
        <Body>
          <Sidebar>
            <NavItem>
              <NavIcon>
                <path d="M8 18.5L24 8.2l16 10.3V40h-9.500v-8a2 2 0 0 0-2-2h-9a2 2 0 0 0-2 2v8H8z" />
              </NavIcon>
            </NavItem>
            <NavItem>
              <NavIcon color="#2b2b2b">
                <path d="M8 26L18 15M24 9l10 10M40 25L30 35M24 41L14 31" />
                <g fill="#2b2b2b" stroke="none">
                  <circle cx="24" cy="9" r="6" />
                  <circle cx="8" cy="25.5" r="6" />
                  <circle cx="40" cy="25.5" r="6" />
                  <circle cx="24" cy="41.5" r="6" />
                </g>
              </NavIcon>
            </NavItem>
            <NavItem>
              <NavIcon>
                <HierarchyShapes />
              </NavIcon>
            </NavItem>
            <NavItem>
              <NavIcon>
                <path d="M35 34V8H8v28a4 4 0 0 0 4 4h25a3 3 0 0 0 3-3v-3h-7v3a3 3 0 0 0 3 3" />
                <path d="M14 15.5h13M14 22.5h13M14 29.5h9" strokeWidth="3.4" strokeLinecap="round" />
              </NavIcon>
            </NavItem>
            <NavItem>
              <NavIcon>
                <path d="M31 35H8a2 2 0 0 1-2-2V9a2 2 0 0 1 2-2h30a2 2 0 0 1 2 2v13M6 17.5h34" strokeWidth="3.6" />
                <g fill="#6b6b6b" stroke="none">
                  <circle cx="11.5" cy="12.5" r="1.6" />
                  <circle cx="16.5" cy="12.5" r="1.6" />
                  <circle cx="21.5" cy="12.5" r="1.6" />
                  <circle cx="38" cy="30.5" r="4.5" />
                  <path d="M30 43.5c1-5 4-6.500 8-6.500s7 1.500 8 6.500z" />
                </g>
              </NavIcon>
            </NavItem>
            <NavItem>
              <NavIcon>
                <rect x="10.5" y="13.5" width="27" height="24.5" rx="2" strokeWidth="3.4" />
                <path d="M10 19.5H6.500a1 1 0 0 0-1 1v9a1 1 0 0 0 1 1H10M38 19.5h3.500a1 1 0 0 1 1 1v9a1 1 0 0 1-1 1H38" strokeWidth="3.2" />
                <path d="M19.500 11.500h9" strokeWidth="5" strokeLinecap="round" />
                <g fill="#6b6b6b" stroke="none">
                  <circle cx="20" cy="25.5" r="2.6" />
                  <circle cx="28.2" cy="25.5" r="2.6" />
                </g>
              </NavIcon>
            </NavItem>
            <NavRule $top={6.4} $bottom={16} />
            <NavItem $h={80}>
              <NavIcon>
                <path d="M10 36.500c3.500-3 4-6 4-17a10 10 0 0 1 20 0c0 11 .5 14 4 17z" transform="translate(0 -1)" />
                <path d="M22 6.200h4" strokeLinecap="round" />
                <path d="M21.500 42h5" strokeLinecap="round" />
              </NavIcon>
            </NavItem>
            <NavItem $h={80}>
              <NavIcon>
                <rect x="8" y="8" width="12" height="12" rx="1" />
                <rect x="28" y="8" width="12" height="12" rx="1" />
                <rect x="8" y="28" width="12" height="12" rx="1" />
                <path d="M32 34v8M40 28v14" />
              </NavIcon>
            </NavItem>
            <NavItem $h={80}>
              <NavIcon>
                <path d="M4 33.5L33.5 4.5L44 15L15 43.8zM12 26l6 5M19.500 18.5l6 5M27 11.500l5.500 5" strokeWidth="3.8" />
              </NavIcon>
            </NavItem>
            <NavItem $h={80}>
              <NavIcon>
                <CylinderShapes />
              </NavIcon>
            </NavItem>
            <NavRule $top={8} $bottom={15} />
            <NavItem $h={80}>
              <NavIcon>
                <path d="M20 6.500h8l1.200 5.500 4 2.300 5.400-1.700 3.400 6-4 3.900v3.500l4 4-3.400 6-5.400-1.800-4 2.300L28 42h-8l-1.200-5.500-4-2.300L9.400 36 6 30l4-4v-3.500l-4-4 3.400-6 5.400 1.800 4-2.300z" />
                <circle cx="24" cy="24.3" r="5" />
              </NavIcon>
              <Notice />
            </NavItem>
            <NavFooter>
              <svg width="32" height="28" viewBox="0 0 32 28" fill="none" stroke="#b3b3b3" strokeWidth="2.8">
                <path d="M2 2.500l12 11.500L2 25.500M15.500 2.500L28 14L15.500 25.500" />
              </svg>
            </NavFooter>
          </Sidebar>
          <Main>
            <Toolbar>
              <FilterButton $w={252} $filled $pad={28} $mr={16}>
                <svg width="28" height="28" viewBox="0 0 28 28" fill="none" stroke="#6b6b6b" strokeWidth="2.2">
                  <circle cx="14" cy="14" r="12.2" />
                  <path d="M14 7.500v7.300l3.600 2.700" />
                </svg>
                <TimeText>
                  <Zone>MST -07:00</Zone>
                  <Range>-15m</Range>
                </TimeText>
                <Caret color="#4d4d4d" />
              </FilterButton>
              <FilterButton $w={306}>
                <FilterLabel $w={233}>Environments : All</FilterLabel>
                <Caret />
              </FilterButton>
              <FilterButton $w={252}>
                <FilterLabel $w={180}>Workflow : All</FilterLabel>
                <Caret />
              </FilterButton>
              <FilterButton $w={193} $mr={15}>
                <FilterLabel $w={119}>Services</FilterLabel>
                <Caret />
              </FilterButton>
              <FilterButton $w={245}>
                <FunnelIcon width="34" height="26" viewBox="0 0 34 26" fill="none" stroke="#b3b3b3" strokeWidth="2.2">
                  <path d="M1.500 1.500h22L15.500 13v8.500L10 24.500V13zM27 9.500v11M21.500 15h11" strokeLinejoin="round" />
                </FunnelIcon>
                <FilterLabel $w={130}>Add filters</FilterLabel>
              </FilterButton>
              <Refresh>
                <svg width="26" height="26" viewBox="0 0 26 26" fill="none" stroke="#2b2b2b" strokeWidth="2.6">
                  <path d="M22.500 15.500A10 10 0 1 1 20 6.200L23 9" />
                  <path d="M23.200 2v7.500h-7.500" />
                </svg>
                <span>Refresh</span>
              </Refresh>
            </Toolbar>
            <Content>
              <MapPane>
                <MapBar>
                  <SolidButton $w={219} $h={64}>
                    <svg width="9" height="14" viewBox="0 0 9 14" fill="none" stroke="#2b2b2b" strokeWidth="1.6">
                      <path d="M7.500 1.500L1.500 7l6 5.500" />
                    </svg>
                    <ButtonText $ml={21} $ls={-0.5}>Overview</ButtonText>
                  </SolidButton>
                  <OptionsButton>
                    <svg width="26" height="26" viewBox="0 0 26 26" fill="none" stroke="#2b2b2b" strokeWidth="2.6">
                      <path d="M0 5h5M11 5h15M0 13h15M21 13h5M0 21h5M11 21h15" />
                      <circle cx="8" cy="5" r="2.9" />
                      <circle cx="18" cy="13" r="2.9" />
                      <circle cx="8" cy="21" r="2.9" />
                    </svg>
                    <Caret color="#4d4d4d" />
                  </OptionsButton>
                  <Count>Showing 43 of 43 services</Count>
                </MapBar>
                <ServiceMap />
                <ZoomDock>
                  <SolidButton $w={289} $h={64} $mr={20}>
                    <svg width="36" height="36" viewBox="0 0 36 36" fill="none" stroke="#2b2b2b" strokeWidth="2.8">
                      <circle cx="18" cy="18" r="16.4" />
                      <path d="M18 15v11.500M18 9.500v3" />
                    </svg>
                    <ButtonText $ml={16} $ls={-0.35}>Show Legend</ButtonText>
                  </SolidButton>
                  <SolidButton $w={64} $h={68} $mr={20}>
                    <svg width="36" height="36" viewBox="0 0 36 36" fill="none" stroke="#4d4d4d" strokeWidth="4" strokeLinejoin="round">
                      <rect x="2" y="2" width="32" height="32" rx="2" />
                      <path d="M19 10h7.500v7M10 19v7.500h8" strokeWidth="3.6" />
                    </svg>
                  </SolidButton>
                  <SolidButton $w={64} $h={68}>
                    <svg width="18" height="4" viewBox="0 0 18 4">
                      <path d="M0 2h18" stroke="#2b2b2b" strokeWidth="2.6" />
                    </svg>
                  </SolidButton>
                  <Track>
                    {Array.from({ length: 10 }, (_, i) => (
                      <Segment key={i} $on={i < 4} />
                    ))}
                    <Thumb />
                  </Track>
                  <SolidButton $w={64} $h={68}>
                    <svg width="22" height="22" viewBox="0 0 22 22">
                      <path d="M0 11h22M11 0v22" stroke="#2b2b2b" strokeWidth="2.6" />
                    </svg>
                  </SolidButton>
                </ZoomDock>
              </MapPane>
              <Aside>
                <Chart
                  title="Services by Error Rate"
                  h={324}
                  ticks={[["20/s", 54], ["15/s", 90], ["10/s", 126], ["5/s", 162]]}
                  lines={[
                    { data: checkout, c: "#f97c0f", y: rateY, o: 0.8 },
                    { data: api, c: "#41ace2", y: rateY, o: 0.92 },
                    { data: payment, c: BLUE, y: rateY, o: 0.75 },
                    { data: ldp, c: MAGENTA, y: rateY },
                    { data: authorization, c: "#38c42c", y: rateY, o: 0.92 },
                  ]}
                  legend={[
                    { v: "17.1", unit: "/s", name: "checkout", c: "#f97c0f" },
                    { v: "17.1", unit: "/s", name: "api", c: BLUE },
                    { v: "11.8", unit: "/s", name: "payment", c: BLUE },
                    { v: "5.25", unit: "/s", name: "ldp", c: MAGENTA },
                    { v: "5.22", unit: "/s", name: "authorization", c: GREEN },
                  ]}
                />
                <Chart
                  title="Top Error Sources"
                  h={324}
                  ticks={[["10/s", 93], ["5/s", 143.6], ["0/s", 193.6]]}
                  lines={[
                    { data: payment, c: BLUE, y: errorY, o: 0.75 },
                    { data: ldp, c: MAGENTA, y: errorY },
                    { data: paymentservice, c: MAGENTA, y: smallY },
                    { data: ripple(63, 16, 2.4), c: STEEL, y: smallY },
                    { data: ripple(64, 12, 0.4), c: GREEN, y: smallY },
                  ]}
                  legend={[
                    { v: "11.8", unit: "/s", name: "payment", c: BLUE },
                    { v: "5.25", unit: "/s", name: "ldp", c: MAGENTA },
                    { v: "1.11", unit: "/s", name: "paymentse…", c: MAGENTA },
                    { v: "0.3", unit: "/s", name: "frontend", c: STEEL },
                    { v: "0.29", unit: "/s", name: "productcat…", c: GREEN },
                  ]}
                />
                <Chart
                  title="Services By Latency (P90)"
                  h={320}
                  ticks={[["1m", 65], ["40s", 108], ["20s", 151]]}
                  lines={[
                    { data: orderProcessor, c: MAGENTA, y: latencyY },
                    { data: checkoutservice, c: FOREST, y: latencyY },
                    { data: ripple(971, 1.5, 0), c: STEEL, y: latencyY, w: 2.4, o: 1 },
                  ]}
                  legend={[
                    { v: "44.50s", name: "order-proc…", c: MAGENTA },
                    { v: "738ms", name: "checkouts…", c: FOREST },
                    { v: "734ms", name: "frontend", c: STEEL },
                    { v: "647ms", name: "mysql:LxvG…", c: "#969696", italic: true },
                    { v: "535ms", name: "cartservice", c: STEEL },
                  ]}
                />
                <Card $h={216}>
                  <CardHead>
                    <CardIcon>
                      <svg width="46" height="44" viewBox="0 0 46 44" fill="#5c5c5c">
                        <path d="M7 9.500h35v6H7a3 3 0 0 1 0-6zM16 33h26v6H16a3 3 0 0 1 0-6z" />
                        <rect x="10" y="21.2" width="20" height="6.2" rx="3" />
                      </svg>
                    </CardIcon>
                    <CardTitle>Traces</CardTitle>
                    <ExpandIcon />
                  </CardHead>
                  <TraceForm>
                    <TraceInput>View Trace ID</TraceInput>
                    <GoButton>Go</GoButton>
                  </TraceForm>
                </Card>
                <Card $h={126}>
                  <CardHead>
                    <CardIcon>
                      <svg width="58" height="58" viewBox="0 0 58 58" fill="none" stroke="#5c5c5c" strokeWidth="4">
                        <ellipse cx="28.5" cy="15.5" rx="16" ry="5.5" />
                        <path d="M12.500 15.500V44c0 4 4 6 9 6h14c5 0 9-2 9-6V15.500M25 33v8M32.500 29v12" />
                      </svg>
                    </CardIcon>
                    <CardTitle>Database Query Performance</CardTitle>
                    <ExpandIcon />
                  </CardHead>
                </Card>
                <Card $h={120}>
                  <CardHead>
                    <CardIcon>
                      <svg width="46" height="46" viewBox="0 0 46 46" fill="none" stroke="#5c5c5c" strokeWidth="3.6" strokeLinejoin="round">
                        <path d="M22 2L39.500 17.500L34 22.500L25 24L10.500 37.500Q8 39.500 6 37L4.500 35Q3 32.500 5 30.500L18.500 17L19 7Z" />
                        <path d="M17 26l3.500-3.500" strokeWidth="3.2" />
                      </svg>
                    </CardIcon>
                    <CardTitle>Tag Spotlight</CardTitle>
                    <ExpandIcon />
                  </CardHead>
                </Card>
              </Aside>
            </Content>
            <BottomBar>
              <Drawer $w={1759}>
                <svg width="26" height="28" viewBox="0 0 48 52" fill="none" stroke="#6b6b6b" strokeWidth="4.2">
                  <circle cx="24" cy="7" r="5" />
                  <path d="M24 12v10M8 38V24a2 2 0 0 1 2-2h28a2 2 0 0 1 2 2v14" />
                  <circle cx="8" cy="43" r="5" />
                  <circle cx="40" cy="43" r="5" />
                </svg>
                <span>Infrastructure (0)</span>
              </Drawer>
              <Drawer $w={1643} $gap={17} $ls={-0.4}>
                <svg width="26" height="28" viewBox="0 0 26 28" fill="none" stroke="#6b6b6b" strokeWidth="2.4">
                  <circle cx="11.5" cy="12.5" r="9.5" />
                  <path d="M18.500 19.500L25 26M6.500 10.500h10M6.500 14.500h7" />
                </svg>
                <span>Logs (0)</span>
              </Drawer>
            </BottomBar>
          </Main>
        </Body>
      </Shell>
    </>
  );
}
